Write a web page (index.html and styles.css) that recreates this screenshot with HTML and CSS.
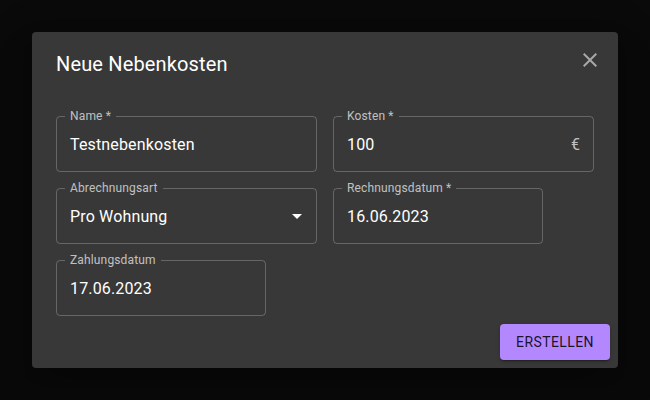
FILE: index.html
```html
<!DOCTYPE html>
<html lang="de">
<head>
<meta charset="utf-8">
<title>Neue Nebenkosten</title>
<link rel="stylesheet" href="styles.css">
</head>
<body>
<div class="dialog">
  <h2 class="dialog-title">Neue Nebenkosten</h2>
  <button class="close-btn" aria-label="Schließen">
    <svg viewBox="0 0 24 24" width="24" height="24"><path d="M19 6.41 17.59 5 12 10.59 6.41 5 5 6.41 10.59 12 5 17.59 6.41 19 12 13.41 17.59 19 19 17.59 13.41 12z"/></svg>
  </button>
  <div class="dialog-content">
    <div class="grid">
      <div class="field">
        <span class="label">Name *</span>
        <span class="value">Testnebenkosten</span>
      </div>
      <div class="field">
        <span class="label">Kosten *</span>
        <span class="value">100</span>
        <span class="adorn">€</span>
      </div>
      <div class="field">
        <span class="label">Abrechnungsart</span>
        <span class="value">Pro Wohnung</span>
        <svg class="arrow" viewBox="0 0 24 24" width="24" height="24"><path d="M7 10l5 5 5-5z"/></svg>
      </div>
      <div class="field narrow">
        <span class="label">Rechnungsdatum *</span>
        <span class="value">16.06.2023</span>
      </div>
      <div class="field narrow">
        <span class="label">Zahlungsdatum</span>
        <span class="value">17.06.2023</span>
      </div>
    </div>
  </div>
  <div class="dialog-actions">
    <button class="primary-btn">Erstellen</button>
  </div>
</div>
</body>
</html>
```
FILE: styles.css
```css
* { box-sizing: border-box; }
html, body { height: 100%; }
body {
  margin: 0;
  background: #0a0a0a;
  font-family: Roboto, "Liberation Sans", sans-serif;
  display: flex;
  align-items: center;
  justify-content: center;
}
.dialog {
  position: relative;
  width: 586px;
  height: 336px;
  background: #383838;
  border-radius: 4px;
  box-shadow: 0 11px 15px -7px rgba(0,0,0,0.2), 0 24px 38px 3px rgba(0,0,0,0.14), 0 9px 46px 8px rgba(0,0,0,0.12);
  display: flex;
  flex-direction: column;
  color: #fff;
}
.dialog-title {
  margin: 0;
  padding: 16px 24px;
  font-size: 20px;
  line-height: 32px;
  font-weight: 400;
  letter-spacing: 0.15px;
}
.close-btn {
  position: absolute;
  top: 8px;
  right: 8px;
  width: 40px;
  height: 40px;
  padding: 8px;
  border: 0;
  background: transparent;
  display: flex;
  align-items: center;
  justify-content: center;
}
.close-btn svg { fill: rgba(255,255,255,0.56); }
.dialog-content {
  flex: 1;
  padding: 20px 24px 0;
}
.grid {
  display: grid;
  grid-template-columns: 261px 261px;
  gap: 16px;
}
.field {
  position: relative;
  height: 56px;
  border: 1px solid rgba(255,255,255,0.23);
  border-radius: 4px;
  padding: 0 13px;
  display: flex;
  align-items: center;
}
.field.narrow { width: 210px; }
.label {
  position: absolute;
  left: 8px;
  top: -8px;
  padding: 0 5px;
  background: #383838;
  font-size: 12px;
  line-height: 14px;
  letter-spacing: 0.15px;
  color: rgba(255,255,255,0.7);
}
.value {
  flex: 1;
  font-size: 16px;
  letter-spacing: 0.15px;
  color: #fff;
}
.adorn {
  font-size: 16px;
  color: rgba(255,255,255,0.7);
}
.arrow {
  position: absolute;
  right: 7px;
  top: 15px;
  fill: #fff;
}
.dialog-actions {
  padding: 8px;
  display: flex;
  justify-content: flex-end;
}
.primary-btn {
  width: 110px;
  height: 36px;
  padding: 6px 8px;
  border: 0;
  border-radius: 4px;
  background: #b388ff;
  color: rgba(0,0,0,0.87);
  font-family: Roboto, "Liberation Sans", sans-serif;
  font-size: 14px;
  font-weight: 400;
  letter-spacing: 0.4px;
  text-transform: uppercase;
  box-shadow: 0 3px 1px -2px rgba(0,0,0,0.2), 0 2px 2px 0 rgba(0,0,0,0.14), 0 1px 5px 0 rgba(0,0,0,0.12);
}
```
